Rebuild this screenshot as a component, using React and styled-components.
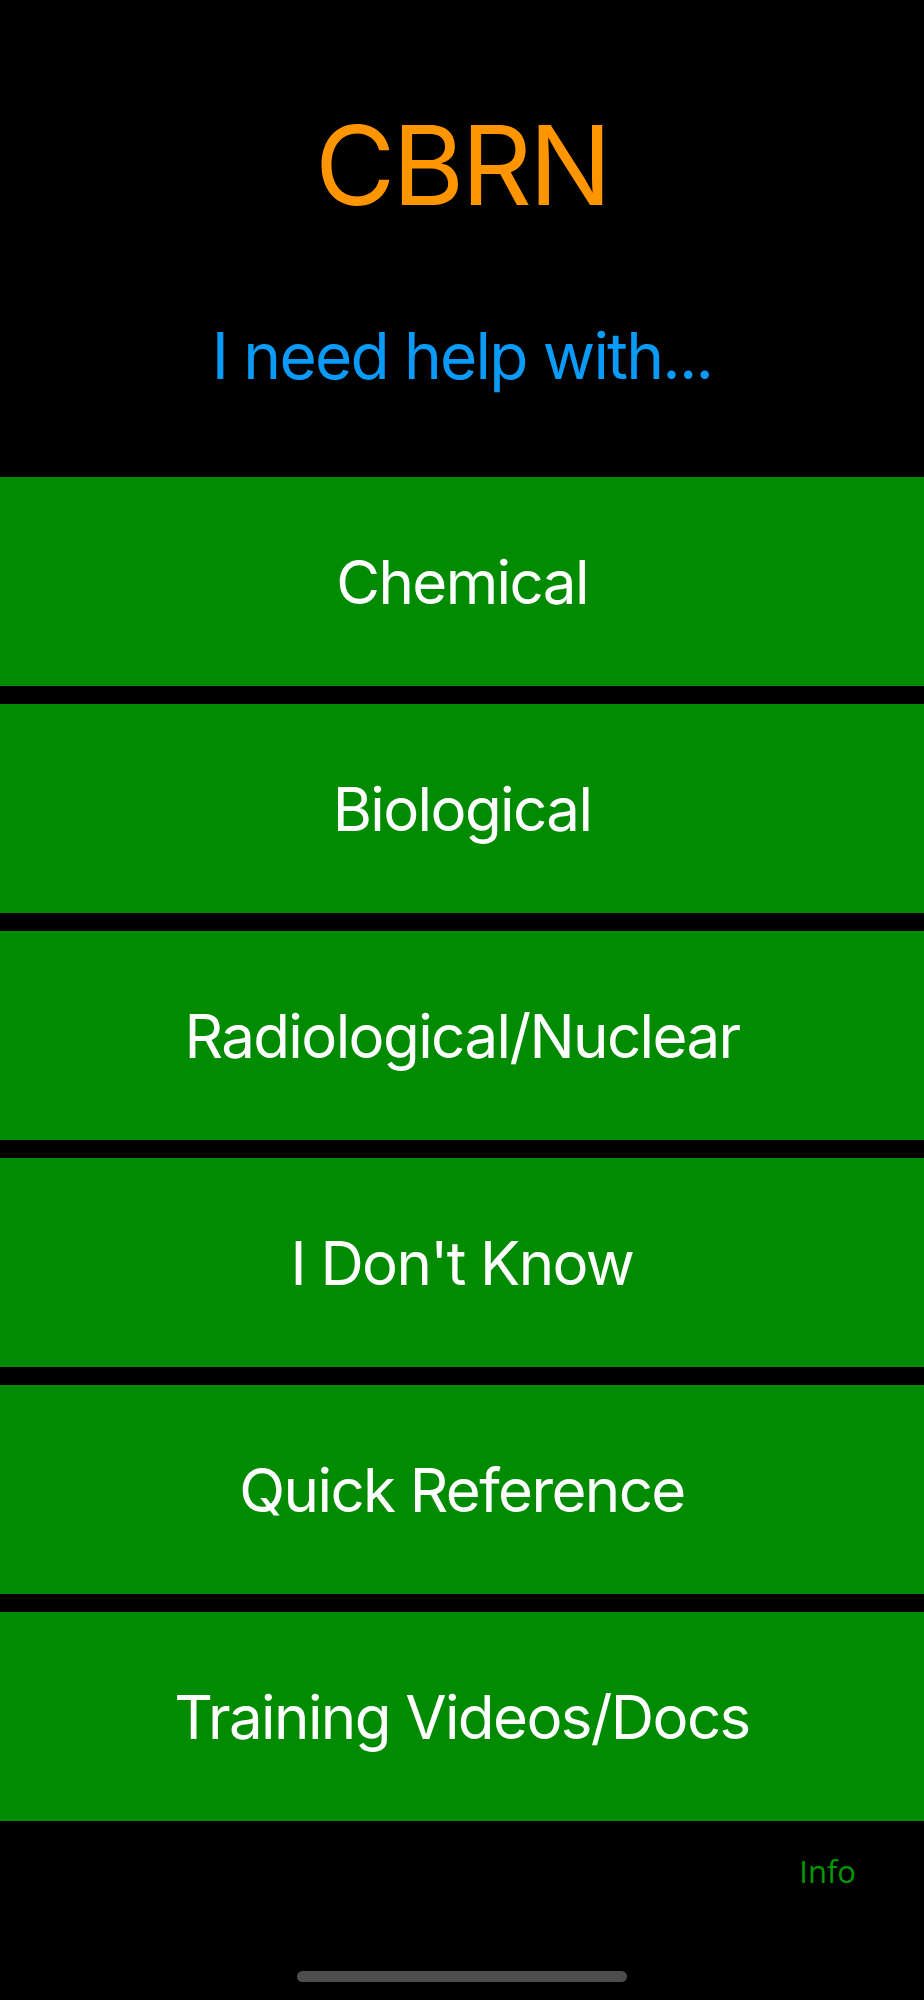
import React from "react"
import styled, {createGlobalStyle} from 'styled-components'

const GlobalStyle = createGlobalStyle`
    html, body {
        margin: 0;
        padding: 0;
        background: #000;
    }
    body {
        font-family: Inter, "Noto Sans", sans-serif;
    }
`

const categories = [
    'Chemical',
    'Biological',
    'Radiological/Nuclear',
    "I Don't Know",
    'Quick Reference',
    'Training Videos/Docs',
]

const App = () => {
    return(
        <Screen>
            <GlobalStyle />
            <Header>
                <Title>CBRN</Title>
                <Subtitle>I need help with...</Subtitle>
            </Header>
            <Menu>
                {categories.map(c => (
                    <MenuButton key={c}>{c}</MenuButton>
                ))}
            </Menu>
            <Footer>
                <InfoRow>
                    <InfoLink>Info</InfoLink>
                </InfoRow>
                <HomeBar />
            </Footer>
        </Screen>
    )
}

export default App

// Styling
const Screen = styled.div`
    width: 924px;
    min-height: 2000px;
    background: #000;
    display: flex;
    flex-direction: column;
`
const Header = styled.div`
    height: 477px;
    display: flex;
    flex-direction: column;
    align-items: center;
`
const Title = styled.h1`
    margin: 110px 0 0;
    font-size: 110px;
    line-height: 1;
    font-weight: 400;
    color: #ff9500;
    letter-spacing: -3px;
`
const Subtitle = styled.h2`
    margin: 104px 0 0;
    font-size: 64px;
    line-height: 1;
    font-weight: 400;
    color: #0a9af7;
    letter-spacing: -1.8px;
`
const Menu = styled.div`
    display: flex;
    flex-direction: column;
    gap: 18px;
`
const MenuButton = styled.button`
    height: 209px;
    border: none;
    margin: 0;
    padding: 0;
    background: #008b00;
    color: #fff;
    font-family: Inter, "Noto Sans", sans-serif;
    font-size: 60px;
    font-weight: 400;
    letter-spacing: -1.6px;
    display: flex;
    align-items: center;
    justify-content: center;
    cursor: pointer;
`
const Footer = styled.div`
    flex: 1;
    display: flex;
    flex-direction: column;
`
const InfoRow = styled.div`
    display: flex;
    justify-content: flex-end;
    padding: 32px 68px 0 0;
`
const InfoLink = styled.a`
    font-family: "Open Sans", sans-serif;
    font-size: 31px;
    line-height: 1.2;
    color: #009a00;
`
const HomeBar = styled.div`
    width: 330px;
    height: 11px;
    border-radius: 6px;
    background: #4d4d4d;
    margin: auto auto 18px;
`
